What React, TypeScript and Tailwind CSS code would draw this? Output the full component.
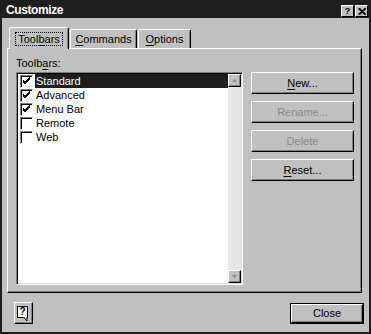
import React from "react";

const F = { fontFamily: '"Liberation Sans", Arial, sans-serif' };

function U({ c }: { c: string }) {
  return <span className="underline underline-offset-[2px] decoration-[1px]">{c}</span>;
}

function Check({ on }: { on: boolean }) {
  return (
    <div className="w-[13px] h-[13px] bg-white border-t border-l border-t-[#808080] border-l-[#808080] border-b border-r border-b-white border-r-white shadow-[inset_1px_1px_0_#000] flex items-center justify-center shrink-0">
      {on && (
        <svg width="9" height="9" viewBox="0 0 9 9">
          <path d="M1 4 L3 6 L8 1 M1 5 L3 7 L8 2 M1 3 L3 5 L8 0" stroke="#000" strokeWidth="1" fill="none" />
        </svg>
      )}
    </div>
  );
}

function Btn({ children, disabled }: { children: React.ReactNode; disabled?: boolean }) {
  return (
    <div
      className={
        "w-[103px] h-[22px] flex items-center justify-center bg-[#c0c0c0] border-t border-l border-t-white border-l-white border-b border-r border-b-black border-r-black shadow-[inset_-1px_-1px_0_#808080] text-[11px] " +
        (disabled ? "text-[#8a8a8a]" : "text-black")
      }
    >
      {children}
    </div>
  );
}

const rows = [
  { n: "Standard", on: true, sel: true },
  { n: "Advanced", on: true },
  { n: "Menu Bar", on: true },
  { n: "Remote", on: false },
  { n: "Web", on: false },
];

export default function App() {
  return (
    <div style={F} className="w-[371px] h-[334px] bg-[#c0c0c0] border-2 border-[#1e1e1e] flex flex-col text-black select-none">
      {/* Title bar */}
      <div className="h-[16px] bg-[#1e1e1e] flex items-center justify-between pl-[4px] pr-[1px]">
        <span className="text-white font-bold text-[12px] tracking-[-0.4px] leading-none">Customize</span>
        <div className="flex gap-[1px] mt-[2px]">
          <div className="w-[13px] h-[12px] bg-[#c0c0c0] border-t border-l border-white border-b border-r border-b-black border-r-black flex items-center justify-center text-[9px] font-bold leading-none">?</div>
          <div className="w-[13px] h-[12px] bg-[#c0c0c0] border-t border-l border-white border-b border-r border-b-black border-r-black flex items-center justify-center">
            <svg width="8" height="7" viewBox="0 0 8 7">
              <path d="M0.5 0.5 L7 6.5 M7 0.5 L0.5 6.5 M1.5 0.5 L8 6.5 M8 0.5 L1.5 6.5" stroke="#000" strokeWidth="1.2" />
            </svg>
          </div>
        </div>
      </div>

      {/* Body */}
      <div className="flex-1 flex flex-col pt-[9px] px-[5px]">
        {/* Tabs */}
        <div className="flex items-end h-[21px] pl-[2px] relative z-10 text-[11px]">
          <div className="w-[60px] h-[22px] bg-[#c0c0c0] border-t border-l border-white border-r border-r-black shadow-[inset_-1px_0_0_#808080] rounded-t-[2px] flex items-start justify-center pt-[4px] -mb-[1px]">
            <span className="border border-dotted border-black px-[2px] leading-[12px]">
              Tool<U c="b" />ars
            </span>
          </div>
          <div className="ml-[1px] w-[67px] h-[19px] bg-[#c0c0c0] border-t border-l border-white border-r border-r-black shadow-[inset_-1px_0_0_#808080] rounded-t-[2px] flex items-center justify-center">
            <span><U c="C" />ommands</span>
          </div>
          <div className="ml-[1px] w-[53px] h-[19px] bg-[#c0c0c0] border-t border-l border-white border-r border-r-black shadow-[inset_-1px_0_0_#808080] rounded-t-[2px] flex items-center justify-center">
            <span><U c="O" />ptions</span>
          </div>
        </div>

        {/* Panel */}
        <div className="w-[355px] h-[245px] border-t border-l border-white border-b border-r border-b-black border-r-black shadow-[inset_-1px_-1px_0_#808080] flex pl-[8px] pt-[8px] text-[11px]">
          <div className="flex flex-col">
            <div className="leading-[13px] h-[14px]">
              Toolb<U c="a" />rs:
            </div>
            <div className="mt-[1px] w-[227px] h-[213px] bg-white border-t border-l border-t-[#808080] border-l-[#808080] border-b border-r border-b-white border-r-white shadow-[inset_1px_1px_0_#000,inset_-1px_-1px_0_#dfdfdf] flex px-[1px] pt-[1px] pb-[1px]">
              <div className="flex-1 flex flex-col">
                {rows.map((r) => (
                  <div key={r.n} className="h-[14px] flex items-center pl-[2px]">
                    <Check on={r.on} />
                    <div
                      className={
                        "ml-[2px] flex-1 h-[14px] flex items-center pl-[1px] " +
                        (r.sel ? "bg-[#1e1e1e] text-white" : "")
                      }
                    >
                      {r.n}
                    </div>
                  </div>
                ))}
              </div>
              <div className="w-[13px] flex flex-col bg-[#e6e6e6]">
                <div className="h-[13px] bg-[#c0c0c0] border-t border-l border-white border-b border-r border-b-black border-r-black shadow-[inset_-1px_-1px_0_#808080] flex items-center justify-center">
                  <svg width="5" height="3" viewBox="0 0 5 3"><path d="M2.5 0 L5 3 L0 3 Z" fill="#8a8a8a" /></svg>
                </div>
                <div className="flex-1" />
                <div className="h-[13px] bg-[#c0c0c0] border-t border-l border-white border-b border-r border-b-black border-r-black shadow-[inset_-1px_-1px_0_#808080] flex items-center justify-center">
                  <svg width="5" height="3" viewBox="0 0 5 3"><path d="M0 0 L5 0 L2.5 3 Z" fill="#8a8a8a" /></svg>
                </div>
              </div>
            </div>
          </div>
          <div className="ml-[8px] mt-[15px] flex flex-col gap-[7px]">
            <Btn><span><U c="N" />ew...</span></Btn>
            <Btn disabled>Rename...</Btn>
            <Btn disabled>Delete</Btn>
            <Btn><span><U c="R" />eset...</span></Btn>
          </div>
        </div>

        {/* Bottom */}
        <div className="flex items-start justify-between pt-[9px] pl-[7px]">
          <div className="w-[19px] h-[22px] bg-[#c0c0c0] border-t border-l border-white border-b border-r border-b-black border-r-black shadow-[inset_-1px_-1px_0_#808080] flex items-start justify-start pl-[2px] pt-[3px]">
            <div className="relative">
              <div className="w-[11px] h-[12px] bg-white border border-black flex items-center justify-center text-[10px] font-bold leading-none">?</div>
              <svg className="absolute left-[6px] top-[11px]" width="5" height="5" viewBox="0 0 5 5">
                <path d="M0.5 0 L4 4 L4 0" fill="white" stroke="black" strokeWidth="1" />
              </svg>
            </div>
          </div>
          <div className="mt-[1px] w-[74px] h-[21px] border border-black">
            <div className="w-full h-full bg-[#c0c0c0] border-t border-l border-white border-b border-r border-b-black border-r-black shadow-[inset_-1px_-1px_0_#808080] flex items-center justify-center text-[11px]">
              Close
            </div>
          </div>
        </div>
      </div>
    </div>
  );
}
